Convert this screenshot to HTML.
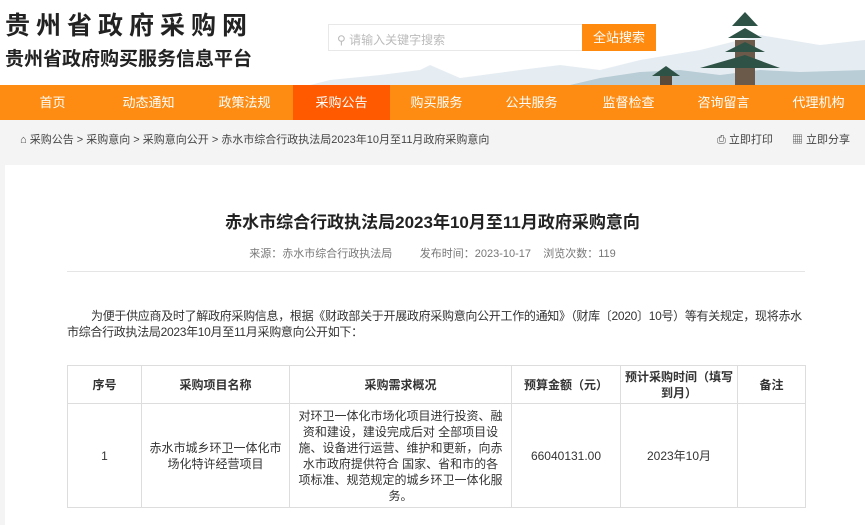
<!DOCTYPE html>
<html><head><meta charset="utf-8"><style>
*{margin:0;padding:0;box-sizing:border-box}
body{width:865px;height:509px;overflow:hidden;background:#f4f4f4;font-family:"Liberation Sans","Noto Sans CJK SC",sans-serif;color:#333;position:relative}
.hdr{position:absolute;left:0;top:0;width:865px;height:85px;background:#fff}
.t1{position:absolute;left:5px;top:6px;font-size:25px;font-weight:bold;letter-spacing:6px;color:#222}
.t2{position:absolute;left:5px;top:44px;font-size:19px;font-weight:bold;color:#222}
.srch{position:absolute;left:328px;top:24px;width:255px;height:27px;border:1px solid #e8e8e8;background:#fff;font-size:12px;color:#bbb;padding:6px 0 0 8px}
.btn{position:absolute;left:582px;top:24px;width:74px;height:27px;background:#ff8a0e;color:#fff;font-size:13px;text-align:center;line-height:27px}
.nav{position:absolute;left:0;top:85px;width:865px;height:35px;background:#ff8c12}
.nav span{position:absolute;top:0;height:35px;line-height:35px;width:97px;text-align:center;color:#fff;font-size:13px}
.nav .on{background:#ff5a00}
.bc{position:absolute;left:20px;top:131px;font-size:11px;color:#444}
.tools{position:absolute;top:131px;font-size:11px;color:#444}
.box{position:absolute;left:5px;top:165px;width:870px;height:360px;background:#fff}
.title{position:absolute;left:0;width:865px;top:208px;text-align:center;font-size:17px;font-weight:bold;color:#222}
.meta{position:absolute;left:0;width:865px;top:245px;text-align:center;font-size:11px;color:#777}
.hr{position:absolute;left:67px;top:271px;width:738px;height:1px;background:#e5e5e5}
.p{position:absolute;left:67px;top:308px;width:740px;font-size:12px;line-height:16px;text-indent:24px;color:#333;letter-spacing:-0.3px}
table{position:absolute;left:67px;top:365px;border-collapse:collapse;font-size:12px;color:#333}
td,th{border:1px solid #ddd;text-align:center;vertical-align:middle}
th{height:38px;font-weight:bold;line-height:16px}
td{height:104px;line-height:16px}
</style></head><body>
<div class="hdr">
<div class="t1">贵州省政府采购网</div>
<div class="t2">贵州省政府购买服务信息平台</div>
<div class="srch">⚲ 请输入关键字搜索</div>
<div class="btn">全站搜索</div>
<svg style="position:absolute;left:310px;top:5px" width="555" height="80" viewBox="310 5 555 80">
<path d="M310 85 L330 80 L380 75 L420 70 L430 65 L460 78 L520 70 L560 65 L600 70 L640 60 L700 50 L760 35 L820 45 L865 40 L865 85Z" fill="#dbe6ec" opacity=".7"/>
<path d="M570 85 L600 78 L640 72 L680 70 L720 75 L760 70 L800 72 L865 70 L865 85Z" fill="#b9cdd6"/>
<rect x="735" y="40" width="20" height="45" fill="#6b5a4a"/>
<path d="M725 52 L765 52 L745 42Z M728 38 L762 38 L745 28Z M732 26 L758 26 L745 12Z" fill="#2f5246"/>
<path d="M700 68 L780 68 L745 55Z" fill="#2f5246"/>
<rect x="660" y="75" width="12" height="10" fill="#5a4a3a"/>
<path d="M652 76 L680 76 L666 66Z" fill="#2f5246"/>
</svg>
</div>
<div class="nav">
<span style="left:4px">首页</span><span style="left:100px">动态通知</span><span style="left:196px">政策法规</span><span class="on" style="left:293px">采购公告</span><span style="left:388px">购买服务</span><span style="left:483px">公共服务</span><span style="left:580px">监督检查</span><span style="left:675px">咨询留言</span><span style="left:770px">代理机构</span>
</div>
<div class="bc">⌂ 采购公告 &gt; 采购意向 &gt; 采购意向公开 &gt; 赤水市综合行政执法局2023年10月至11月政府采购意向</div>
<div class="tools" style="left:717px">⎙ 立即打印</div>
<div class="tools" style="left:792px">▦ 立即分享</div>
<div class="box"></div>
<div class="title">赤水市综合行政执法局2023年10月至11月政府采购意向</div>
<div class="meta">来源：赤水市综合行政执法局 &nbsp; &nbsp; &nbsp; &nbsp; 发布时间：2023-10-17 &nbsp; &nbsp;浏览次数：119</div>
<div class="hr"></div>
<div class="p">为便于供应商及时了解政府采购信息，根据《财政部关于开展政府采购意向公开工作的通知》（财库〔2020〕10号）等有关规定，现将赤水<br>市综合行政执法局2023年10月至11月采购意向公开如下：</div>
<table>
<tr><th style="width:74px">序号</th><th style="width:148px">采购项目名称</th><th style="width:222px">采购需求概况</th><th style="width:109px">预算金额（元）</th><th style="width:117px">预计采购时间（填写到月）</th><th style="width:68px">备注</th></tr>
<tr><td>1</td><td>赤水市城乡环卫一体化市<br>场化特许经营项目</td><td style="padding:0 8px">对环卫一体化市场化项目进行投资、融资和建设，建设完成后对 全部项目设施、设备进行运营、维护和更新，向赤水市政府提供符合 国家、省和市的各项标准、规范规定的城乡环卫一体化服务。</td><td>66040131.00</td><td>2023年10月</td><td></td></tr>
</table>
</body></html>
